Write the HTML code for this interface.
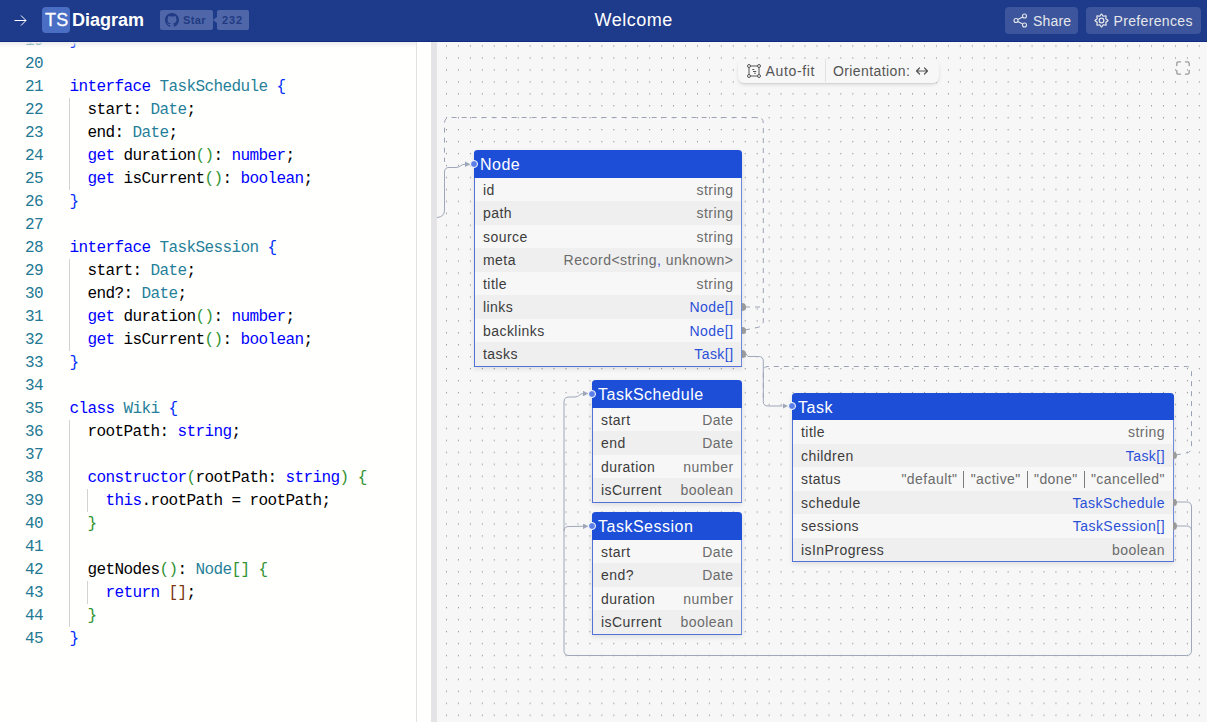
<!DOCTYPE html>
<html><head><meta charset="utf-8"><style>
*{box-sizing:border-box;margin:0;padding:0}
html,body{width:1207px;height:722px;overflow:hidden;background:#fff;font-family:"Liberation Sans",sans-serif}
#hdr{position:absolute;left:0;top:0;width:1207px;height:42px;background:#1e3a8a;box-shadow:inset 0 -1px 0 #112b80}
.t{position:absolute;white-space:nowrap}
#editor{position:absolute;left:0;top:42px;width:431px;height:680px;background:#fffffe;overflow:hidden}
.ln{position:absolute;left:0;width:43px;text-align:right;font-family:"Liberation Mono",monospace;font-size:16px;letter-spacing:-0.6px;line-height:23px;color:#237893;white-space:pre}
.cl{position:absolute;left:69.5px;font-family:"Liberation Mono",monospace;font-size:16px;letter-spacing:-0.6px;line-height:23px;color:#000;white-space:pre}
.k{color:#0000ff}.y{color:#267f99}.b1{color:#0431fa}.b2{color:#319331}.b3{color:#7b3814}
.ig{position:absolute;width:1px;background:#d3d3d3}
#ruler{position:absolute;left:416px;top:0;width:1px;height:680px;background:#e2e2e2}
#eshadow{position:absolute;left:0;top:0;width:416px;height:6px;background:linear-gradient(#ececec,rgba(255,255,255,0))}
#gutter{position:absolute;left:431px;top:42px;width:6px;height:680px;background:#e4e4e7}
#canvas{position:absolute;left:437px;top:42px;width:770px;height:680px;background:#f7f7f7;overflow:hidden}
#dots{position:absolute;left:0;top:0}
#edges{position:absolute;left:0;top:0}
.tbl{position:absolute;border:1px solid #5272d9;border-right-color:#7088dc;border-top:none;border-radius:4px 4px 0 0;background:#f7f7f7;box-shadow:0 2px 5px rgba(0,0,0,0.10)}
.th{position:relative;height:27.5px;background:#1d4ed8;color:#fff;font-size:16px;line-height:30px;letter-spacing:0.5px;border-radius:4px 4px 0 0;margin:0 -1px;padding-left:6px;white-space:nowrap}
.tr{position:relative;height:23.5px;line-height:25.2px;font-size:14px;letter-spacing:0.45px;color:#3c3c3c;padding:0 7.5px 0 8px;display:flex;justify-content:space-between;white-space:nowrap}
.tr.o{background:#efefef}
.tr .v{color:#6b6b6b}
.pp{display:inline-block;width:1px;height:16.5px;background:#7c7c7c;vertical-align:-3.6px;margin:0 6.2px 0 6px}
.tr .r{color:#2b50d8}
.hl{position:absolute;width:8px;height:8px;border-radius:50%;background:#5b7fe6;border:1px solid #fff;left:-4.5px;top:9.5px}
.hr{position:absolute;width:4px;height:7.5px;border-radius:0 4px 4px 0;background:#9a9a9a;right:-4.5px;top:8px}
.btn{position:absolute;top:7px;height:27px;border-radius:4px;background:#3c559c}
.panel{position:absolute;left:301px;top:17px;width:200.5px;height:24px;border-radius:6px;background:#f7f7f7;box-shadow:0 2px 4px -1px rgba(0,0,0,0.16),0 1px 1px rgba(0,0,0,0.05)}
</style></head>
<body>
<div id="hdr">
<svg class="t" style="left:14px;top:14px" width="13" height="13" viewBox="0 0 13 13"><path d="M0.5 6.5H12M7 1.5L12 6.5L7 11.5" fill="none" stroke="#fff" stroke-width="1"/></svg>
<div class="t" style="left:42px;top:7px;width:28px;height:26px;border-radius:4px;background:#4a6ec4"></div>
<div class="t" style="left:45px;top:9px;font-size:18px;line-height:22px;letter-spacing:0.3px;color:#fff;-webkit-text-stroke:0.3px #fff">TS</div>
<div class="t" style="left:72px;top:9px;font-size:18px;line-height:22px;font-weight:bold;color:#fff">Diagram</div>
<div class="t" style="left:160px;top:10px;width:53px;height:20px;border-radius:2px;background:#4f67a9"></div>
<svg class="t" style="left:165px;top:13px" width="14" height="14" viewBox="0 0 16 16"><path fill="#213b85" d="M8 0C3.58 0 0 3.58 0 8c0 3.54 2.29 6.53 5.47 7.59.4.07.55-.17.55-.38 0-.19-.01-.82-.01-1.49-2.01.37-2.53-.49-2.69-.94-.09-.23-.48-.94-.82-1.13-.28-.15-.68-.52-.01-.53.63-.01 1.08.58 1.23.82.72 1.21 1.87.87 2.33.66.07-.52.28-.87.51-1.07-1.78-.2-3.64-.89-3.64-3.95 0-.87.31-1.59.82-2.15-.08-.2-.36-1.02.08-2.12 0 0 .67-.21 2.2.82.64-.18 1.32-.27 2-.27.68 0 1.36.09 2 .27 1.53-1.04 2.2-.82 2.2-.82.44 1.1.16 1.92.08 2.12.51.56.82 1.27.82 2.15 0 3.07-1.87 3.75-3.65 3.95.29.25.54.73.54 1.48 0 1.07-.01 1.93-.01 2.2 0 .21.15.46.55.38A8.013 8.013 0 0016 8c0-4.42-3.58-8-8-8z"/></svg>
<div class="t" style="left:183px;top:13px;font-size:11px;line-height:14px;font-weight:bold;letter-spacing:0.4px;color:#213a82">Star</div>
<div class="t" style="left:217px;top:10px;width:32px;height:20px;border-radius:2px;background:#4f67a9"></div>
<div class="t" style="left:213px;top:16.5px;width:0;height:0;border-top:3.5px solid transparent;border-bottom:3.5px solid transparent;border-right:4px solid #4f67a9"></div>
<div class="t" style="left:222px;top:13px;font-size:11px;line-height:14px;font-weight:bold;letter-spacing:0.9px;color:#213a82">232</div>
<div class="t" style="left:594.5px;top:9.3px;font-size:18px;line-height:22px;letter-spacing:0.5px;color:#fff">Welcome</div>
<div class="btn" style="left:1005px;width:73px"></div>
<svg class="t" style="left:1013px;top:13px" width="15" height="15" viewBox="0 0 15 15"><g fill="none" stroke="#e5e7eb" stroke-width="1.1"><circle cx="11.5" cy="3" r="2"/><circle cx="3" cy="7.5" r="2"/><circle cx="11.5" cy="12" r="2"/><path d="M4.8 6.5L9.7 4M4.8 8.5L9.7 11"/></g></svg>
<div class="t" style="left:1033px;top:12.5px;font-size:14px;line-height:16px;letter-spacing:0.2px;color:#e5e7eb">Share</div>
<div class="btn" style="left:1086px;width:115px"></div>
<svg class="t" style="left:1094px;top:13px" width="15" height="15" viewBox="0 0 15 15"><g fill="none" stroke="#e5e7eb" stroke-width="1.25" stroke-linejoin="round"><path d="M7.50 1.00 C8.10 1.00 8.53 2.84 9.30 3.16 C10.06 3.48 11.67 2.48 12.10 2.90 C12.52 3.33 11.52 4.94 11.84 5.70 C12.16 6.47 14.00 6.90 14.00 7.50 C14.00 8.10 12.16 8.53 11.84 9.30 C11.52 10.06 12.52 11.67 12.10 12.10 C11.67 12.52 10.06 11.52 9.30 11.84 C8.53 12.16 8.10 14.00 7.50 14.00 C6.90 14.00 6.47 12.16 5.70 11.84 C4.94 11.52 3.33 12.52 2.90 12.10 C2.48 11.67 3.48 10.06 3.16 9.30 C2.84 8.53 1.00 8.10 1.00 7.50 C1.00 6.90 2.84 6.47 3.16 5.70 C3.48 4.94 2.48 3.33 2.90 2.90 C3.33 2.48 4.94 3.48 5.70 3.16 C6.47 2.84 6.90 1.00 7.50 1.00Z"/><circle cx="7.5" cy="7.5" r="2.3"/></g></svg>
<div class="t" style="left:1113.5px;top:12.5px;font-size:14px;line-height:16px;letter-spacing:0.35px;color:#e5e7eb">Preferences</div>
</div>
<div id="editor"><div class="ln" style="top:-12.2px">19</div>
<div class="cl" style="top:-12.2px"><span class="b1">}</span></div>
<div class="ln" style="top:10.8px">20</div>
<div class="ln" style="top:33.8px">21</div>
<div class="cl" style="top:33.8px"><span class="k">interface</span> <span class="y">TaskSchedule</span> <span class="b1">{</span></div>
<div class="ln" style="top:56.8px">22</div>
<div class="cl" style="top:56.8px">  start: <span class="y">Date</span>;</div>
<div class="ln" style="top:79.8px">23</div>
<div class="cl" style="top:79.8px">  end: <span class="y">Date</span>;</div>
<div class="ln" style="top:102.8px">24</div>
<div class="cl" style="top:102.8px">  <span class="k">get</span> duration<span class="b2">()</span>: <span class="k">number</span>;</div>
<div class="ln" style="top:125.8px">25</div>
<div class="cl" style="top:125.8px">  <span class="k">get</span> isCurrent<span class="b2">()</span>: <span class="k">boolean</span>;</div>
<div class="ln" style="top:148.8px">26</div>
<div class="cl" style="top:148.8px"><span class="b1">}</span></div>
<div class="ln" style="top:171.8px">27</div>
<div class="ln" style="top:194.8px">28</div>
<div class="cl" style="top:194.8px"><span class="k">interface</span> <span class="y">TaskSession</span> <span class="b1">{</span></div>
<div class="ln" style="top:217.8px">29</div>
<div class="cl" style="top:217.8px">  start: <span class="y">Date</span>;</div>
<div class="ln" style="top:240.8px">30</div>
<div class="cl" style="top:240.8px">  end?: <span class="y">Date</span>;</div>
<div class="ln" style="top:263.8px">31</div>
<div class="cl" style="top:263.8px">  <span class="k">get</span> duration<span class="b2">()</span>: <span class="k">number</span>;</div>
<div class="ln" style="top:286.8px">32</div>
<div class="cl" style="top:286.8px">  <span class="k">get</span> isCurrent<span class="b2">()</span>: <span class="k">boolean</span>;</div>
<div class="ln" style="top:309.8px">33</div>
<div class="cl" style="top:309.8px"><span class="b1">}</span></div>
<div class="ln" style="top:332.8px">34</div>
<div class="ln" style="top:355.8px">35</div>
<div class="cl" style="top:355.8px"><span class="k">class</span> <span class="y">Wiki</span> <span class="b1">{</span></div>
<div class="ln" style="top:378.8px">36</div>
<div class="cl" style="top:378.8px">  rootPath: <span class="k">string</span>;</div>
<div class="ln" style="top:401.8px">37</div>
<div class="ln" style="top:424.8px">38</div>
<div class="cl" style="top:424.8px">  <span class="k">constructor</span><span class="b2">(</span>rootPath: <span class="k">string</span><span class="b2">)</span> <span class="b2">{</span></div>
<div class="ln" style="top:447.8px">39</div>
<div class="cl" style="top:447.8px">    <span class="k">this</span>.rootPath = rootPath;</div>
<div class="ln" style="top:470.8px">40</div>
<div class="cl" style="top:470.8px">  <span class="b2">}</span></div>
<div class="ln" style="top:493.8px">41</div>
<div class="ln" style="top:516.8px">42</div>
<div class="cl" style="top:516.8px">  getNodes<span class="b2">()</span>: <span class="y">Node</span><span class="b2">[]</span> <span class="b2">{</span></div>
<div class="ln" style="top:539.8px">43</div>
<div class="cl" style="top:539.8px">    <span class="k">return</span> <span class="b3">[]</span>;</div>
<div class="ln" style="top:562.8px">44</div>
<div class="cl" style="top:562.8px">  <span class="b2">}</span></div>
<div class="ln" style="top:585.8px">45</div>
<div class="cl" style="top:585.8px"><span class="b1">}</span></div>
<div class="ig" style="left:69.0px;top:56px;height:92px"></div>
<div class="ig" style="left:69.0px;top:217px;height:92px"></div>
<div class="ig" style="left:69.0px;top:378px;height:207px"></div>
<div class="ig" style="left:87.0px;top:447px;height:23px"></div>
<div class="ig" style="left:87.0px;top:539px;height:23px"></div>
<div id="ruler"></div><div id="eshadow"></div></div>
<div id="gutter"></div>
<div id="canvas"><svg id="dots" width="770" height="680"><defs><pattern id="dp" x="9.0" y="3.35" width="11.95" height="11.95" patternUnits="userSpaceOnUse"><ellipse cx="0.5" cy="0.7" rx="0.5" ry="0.8" fill="#8a8a94"/></pattern></defs><rect width="770" height="680" fill="url(#dp)"/></svg><svg id="edges" width="770" height="680"><defs><marker id="ar" viewBox="0 0 10 10" refX="0" refY="5" markerWidth="5.5" markerHeight="5.5" orient="auto" markerUnits="userSpaceOnUse"><path d="M0 0L10 5L0 10z" fill="#9ea8b9"/></marker></defs><path d="M 308.00,265.00 L 326.30,265.00" stroke="#9aa3b5" stroke-width="1" fill="none" stroke-dasharray="5 5"/><path d="M 308.00,288.00 L 320.00,285.50 Q 326.30,284.50 326.30,279.00 L 326.30,81.00 Q 326.30,75.50 321.00,75.50 L 13.00,75.50 Q 7.50,75.50 7.50,81.00 L 7.50,120.00" stroke="#9aa3b5" stroke-width="1" fill="none" stroke-dasharray="5 5"/><path d="M 739.00,413.00 L 749.00,411.00 Q 754.50,410.50 754.50,405.00 L 754.50,330.00 Q 754.50,324.50 749.00,324.50 L 331.00,324.50 Q 326.30,324.50 326.30,329.00 L 326.30,359.00" stroke="#9aa3b5" stroke-width="1" fill="none" stroke-dasharray="5 5"/><path d="M 0.00,175.50 Q 7.50,175.00 7.50,168.00 L 7.50,130.00 Q 7.50,125.50 12.00,125.50 L 19.00,125.50 C 23.00,125.50 24.00,122.20 28.00,122.20" stroke="#9ea8b9" stroke-width="1" fill="none" marker-end="url(#ar)"/><path d="M 308.00,310.50 L 311.00,314.50 L 321.50,314.50 Q 326.30,314.50 326.30,319.00 L 326.30,359.50 Q 326.30,364.00 331.00,364.00 L 345.50,364.00" stroke="#9ea8b9" stroke-width="1" fill="none" marker-end="url(#ar)"/><path d="M 739.00,460.00 L 749.50,460.00 Q 754.50,460.00 754.50,465.00 L 754.50,608.50 Q 754.50,613.50 749.50,613.50 L 132.00,613.50 Q 127.00,613.50 127.00,608.50 L 127.00,360.00 Q 127.00,355.00 132.00,355.00 L 138.00,355.00 C 142.00,355.00 142.50,351.60 146.00,351.60" stroke="#9ea8b9" stroke-width="1" fill="none" marker-end="url(#ar)"/><path d="M 739.00,484.00 L 749.50,484.00 Q 754.50,484.00 754.50,489.00 L 754.50,608.50" stroke="#9ea8b9" stroke-width="1" fill="none"/><path d="M 127.00,489.00 Q 127.00,484.50 132.00,484.50 L 146.00,484.30" stroke="#9ea8b9" stroke-width="1" fill="none" marker-end="url(#ar)"/></svg><div class="tbl" style="left:37px;top:108px;width:268px"><div class="th"><div class="hl"></div>Node</div><div class="tr"><span>id</span><span class="v">string</span></div><div class="tr o"><span>path</span><span class="v">string</span></div><div class="tr"><span>source</span><span class="v">string</span></div><div class="tr o"><span>meta</span><span class="v">Record&lt;string<span class="r">,</span> unknown&gt;</span></div><div class="tr"><span>title</span><span class="v">string</span></div><div class="tr o"><span>links</span><span class="r">Node[]</span><div class="hr"></div></div><div class="tr"><span>backlinks</span><span class="r">Node[]</span><div class="hr"></div></div><div class="tr o"><span>tasks</span><span class="r">Task[]</span><div class="hr"></div></div></div><div class="tbl" style="left:155px;top:338px;width:150px"><div class="th"><div class="hl"></div>TaskSchedule</div><div class="tr"><span>start</span><span class="v">Date</span></div><div class="tr o"><span>end</span><span class="v">Date</span></div><div class="tr"><span>duration</span><span class="v">number</span></div><div class="tr o"><span>isCurrent</span><span class="v">boolean</span></div></div><div class="tbl" style="left:155px;top:470.4px;width:150px"><div class="th"><div class="hl"></div>TaskSession</div><div class="tr"><span>start</span><span class="v">Date</span></div><div class="tr o"><span>end?</span><span class="v">Date</span></div><div class="tr"><span>duration</span><span class="v">number</span></div><div class="tr o"><span>isCurrent</span><span class="v">boolean</span></div></div><div class="tbl" style="left:355px;top:350.6px;width:381.5px"><div class="th"><div class="hl"></div>Task</div><div class="tr"><span>title</span><span class="v">string</span></div><div class="tr o"><span>children</span><span class="r">Task[]</span><div class="hr"></div></div><div class="tr"><span>status</span><span class="v">"default"<span class="pp"></span>"active"<span class="pp"></span>"done"<span class="pp"></span>"cancelled"</span></div><div class="tr o"><span>schedule</span><span class="r">TaskSchedule</span><div class="hr"></div></div><div class="tr"><span>sessions</span><span class="r">TaskSession[]</span><div class="hr"></div></div><div class="tr o"><span>isInProgress</span><span class="v">boolean</span></div></div><div class="panel"></div>
<div class="t" style="left:387.6px;top:17px;width:1px;height:23px;background:#e2e2e2"></div>
<svg class="t" style="left:310px;top:22.4px" width="14" height="14" viewBox="0 0 14 14"><g fill="none" stroke="#555" stroke-width="1"><rect x="2" y="2" width="10" height="10"/><circle cx="2" cy="2" r="1.5" fill="#f7f7f7"/><circle cx="12" cy="2" r="1.5" fill="#f7f7f7"/><circle cx="2" cy="12" r="1.5" fill="#f7f7f7"/><circle cx="12" cy="12" r="1.5" fill="#f7f7f7"/><path d="M5.3 5.5h2M6 7.5h3.2M7.2 9.3h1.6" stroke-width="1.1"/></g></svg>
<div class="t" style="left:328.6px;top:21.3px;font-size:14px;line-height:16px;letter-spacing:0.65px;color:#555">Auto-fit</div>
<div class="t" style="left:396px;top:21.3px;font-size:14px;line-height:16px;letter-spacing:0.4px;color:#555">Orientation:</div><svg class="t" style="left:478px;top:23px" width="14" height="12" viewBox="0 0 14 12"><g fill="none" stroke="#555" stroke-width="1.2" stroke-linecap="round" stroke-linejoin="round"><path d="M1.5 6h11M4.5 3L1.5 6L4.5 9M9.5 3L12.5 6L9.5 9"/></g></svg>
<svg class="t" style="left:739px;top:19px" width="14" height="14" viewBox="0 0 14 14"><g fill="none" stroke="#9a9a9a" stroke-width="1.3" stroke-linecap="round"><path d="M0.8 4.5V2.5Q0.8 0.8 2.5 0.8H4.5M9.5 0.8H11.5Q13.2 0.8 13.2 2.5V4.5M13.2 9.5V11.5Q13.2 13.2 11.5 13.2H9.5M4.5 13.2H2.5Q0.8 13.2 0.8 11.5V9.5"/></g></svg>
</div>
</body></html>
